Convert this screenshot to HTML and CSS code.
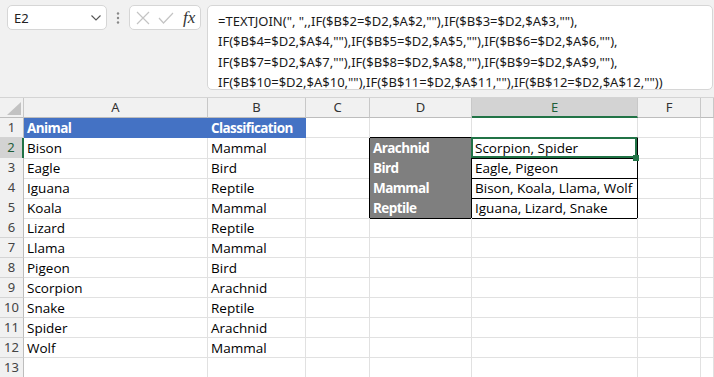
FILE: index.html
```html
<!DOCTYPE html>
<html lang="en">
<head>
  <meta charset="UTF-8">
  <meta name="viewport" content="width=device-width, initial-scale=1.0">
  <title>TEXTJOIN by classification</title>
  <link rel="stylesheet" href="styles.css">
</head>
<body>
  <div class="toolbar">
    <div class="namebox">
      <span>E2</span>
      <svg class="chevron" width="10" height="6" viewBox="0 0 10 6"><path d="M0.5 0.5 L5 5 L9.5 0.5" fill="none" stroke="#555" stroke-width="1.1"/></svg>
    </div>
    <div class="dots">
      <svg width="4" height="12" viewBox="0 0 4 12"><circle cx="2" cy="1.5" r="1.2" fill="#888"/><circle cx="2" cy="6" r="1.2" fill="#888"/><circle cx="2" cy="10.5" r="1.2" fill="#888"/></svg>
    </div>
    <div class="fxbox">
      <svg width="14" height="14" viewBox="0 0 14 14"><path d="M1 1 L13 13 M13 1 L1 13" stroke="#c4c4c4" stroke-width="1.2" fill="none"/></svg>
      <svg width="16" height="12" viewBox="0 0 16 12"><path d="M1 6 L5.5 11 L15 1" stroke="#c4c4c4" stroke-width="1.2" fill="none"/></svg>
      <span class="fx">fx</span>
    </div>
    <div class="formula">
      <div>=TEXTJOIN(", ",,IF($B$2=$D2,$A$2,""),IF($B$3=$D2,$A$3,""),</div>
      <div>IF($B$4=$D2,$A$4,""),IF($B$5=$D2,$A$5,""),IF($B$6=$D2,$A$6,""),</div>
      <div>IF($B$7=$D2,$A$7,""),IF($B$8=$D2,$A$8,""),IF($B$9=$D2,$A$9,""),</div>
      <div>IF($B$10=$D2,$A$10,""),IF($B$11=$D2,$A$11,""),IF($B$12=$D2,$A$12,""))</div>
    </div>
  </div>

  <div class="sheet">
    <div class="row head">
      <div class="corner"><svg width="24" height="20" viewBox="0 0 24 20"><path d="M7 17 L21 17 L21 4 Z" fill="#c2c2c2"/></svg></div>
      <div>A</div><div>B</div><div>C</div><div>D</div><div class="picked">E</div><div>F</div><div></div>
    </div>
    <div class="row">
      <div class="num">1</div>
      <div class="title">Animal</div><div class="title">Classification</div>
      <div></div><div class="above"></div><div class="above"></div><div></div><div></div>
    </div>
    <div class="row">
      <div class="num picked">2</div>
      <div>Bison</div><div>Mammal</div><div class="before"></div>
      <div class="key">Arachnid</div><div class="val active">Scorpion, Spider<span class="handle"></span></div><div></div><div></div>
    </div>
    <div class="row">
      <div class="num">3</div>
      <div>Eagle</div><div>Bird</div><div class="before"></div>
      <div class="key">Bird</div><div class="val">Eagle, Pigeon</div><div></div><div></div>
    </div>
    <div class="row">
      <div class="num">4</div>
      <div>Iguana</div><div>Reptile</div><div class="before"></div>
      <div class="key">Mammal</div><div class="val">Bison, Koala, Llama, Wolf</div><div></div><div></div>
    </div>
    <div class="row">
      <div class="num">5</div>
      <div>Koala</div><div>Mammal</div><div class="before"></div>
      <div class="key">Reptile</div><div class="val">Iguana, Lizard, Snake</div><div></div><div></div>
    </div>
    <div class="row">
      <div class="num">6</div>
      <div>Lizard</div><div>Reptile</div><div></div><div></div><div></div><div></div><div></div>
    </div>
    <div class="row">
      <div class="num">7</div>
      <div>Llama</div><div>Mammal</div><div></div><div></div><div></div><div></div><div></div>
    </div>
    <div class="row">
      <div class="num">8</div>
      <div>Pigeon</div><div>Bird</div><div></div><div></div><div></div><div></div><div></div>
    </div>
    <div class="row">
      <div class="num">9</div>
      <div>Scorpion</div><div>Arachnid</div><div></div><div></div><div></div><div></div><div></div>
    </div>
    <div class="row">
      <div class="num">10</div>
      <div>Snake</div><div>Reptile</div><div></div><div></div><div></div><div></div><div></div>
    </div>
    <div class="row">
      <div class="num">11</div>
      <div>Spider</div><div>Arachnid</div><div></div><div></div><div></div><div></div><div></div>
    </div>
    <div class="row">
      <div class="num">12</div>
      <div>Wolf</div><div>Mammal</div><div></div><div></div><div></div><div></div><div></div>
    </div>
    <div class="row">
      <div class="num">13</div>
      <div></div><div></div><div></div><div></div><div></div><div></div><div></div>
    </div>
  </div>
</body>
</html>
```

FILE: styles.css
```css
* {
  margin: 0;
  padding: 0;
  box-sizing: border-box;
}

body {
  background: #f1f1f1;
  font-family: 'Open Sans', sans-serif;
  overflow: hidden;
}

.toolbar {
  display: flex;
  align-items: flex-start;
  height: 97px;
  padding: 5px 1px 0 7px;
}

.namebox {
  width: 100px;
  height: 25px;
  background: #fff;
  border: 1px solid #d6d6d6;
  border-radius: 5px;
  display: flex;
  align-items: center;
  justify-content: space-between;
  padding: 0 5px 0 6px;
  font-family: 'Noto Sans', sans-serif;
  font-size: 13px;
  color: #222;
}

.dots {
  width: 22px;
  height: 25px;
  display: flex;
  align-items: center;
  justify-content: center;
}

.fxbox {
  width: 72px;
  height: 25px;
  background: #fff;
  border: 1px solid #d6d6d6;
  border-radius: 5px;
  display: flex;
  align-items: center;
  gap: 8px;
  padding-left: 6px;
}

.fx {
  font-family: 'Liberation Serif', serif;
  font-style: italic;
  font-size: 17px;
  color: #333;
  margin-left: 1px;
}

.formula {
  flex: 1;
  height: 85px;
  margin-left: 6px;
  background: #fff;
  border: 1px solid #d6d6d6;
  border-radius: 5px;
  padding: 5px 0 0 10px;
  font-family: 'Noto Sans', sans-serif;
  font-size: 13px;
  line-height: 20.3px;
  color: #1a1a1a;
  white-space: nowrap;
}

.sheet {
  border-top: 1px solid #d4d4d4;
  background: #fff;
}

.row {
  display: grid;
  grid-template-columns: 24px 184px 98px 64px 102px 166px 63px 1fr;
  height: 20px;
  font-size: 13.5px;
  line-height: 20px;
  color: #000;
}

.row > div {
  border-right: 1px solid #e1e1e1;
  border-bottom: 1px solid #e1e1e1;
  padding-left: 3px;
  white-space: nowrap;
  overflow: hidden;
  position: relative;
}

.head > div {
  background: #f1f1f1;
  border-right-color: #c8c8c8;
  border-bottom-color: #bdbdbd;
  text-align: center;
  padding-left: 0;
  font-family: 'Noto Sans', sans-serif;
  font-size: 13px;
  line-height: 19px;
  color: #333;
}

.head > .corner {
  padding: 0;
}

.head > .picked {
  background: #d3d3d3;
  border-bottom: 2px solid #217346;
  color: #1f5f3a;
}

.row > .num {
  background: #f1f1f1;
  border-right-color: #bdbdbd;
  border-bottom-color: #d4d4d4;
  text-align: center;
  padding-left: 0;
  font-family: 'Noto Sans', sans-serif;
  font-size: 13px;
  line-height: 19px;
  color: #444;
}

.row > .num.picked {
  background: #d3d3d3;
  border-right: 2px solid #217346;
  color: #1f5f3a;
}

.row > .title {
  background: #4472c4;
  border-color: #4472c4;
  color: #fff;
  font-weight: 700;
  letter-spacing: -0.6px;
}

.row > .above {
  border-bottom-color: #000;
}

.row > .before {
  border-right-color: #000;
}

.row > .key {
  background: #7f7f7f;
  border-color: #000;
  color: #fff;
  font-weight: 700;
  letter-spacing: -0.6px;
  padding-left: 3px;
}

.row > .val {
  border-color: #000;
  overflow: visible;
}

.active::after {
  content: "";
  position: absolute;
  left: -1px;
  top: -1px;
  right: 0;
  bottom: 0;
  border: 2px solid #217346;
}

.handle {
  position: absolute;
  right: -2px;
  bottom: -3px;
  width: 6px;
  height: 6px;
  background: #217346;
  z-index: 2;
}
```
